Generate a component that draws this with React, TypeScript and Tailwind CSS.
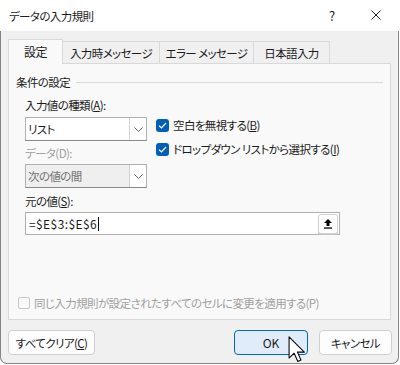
import React from 'react';

const Check = () => (
  <span className="flex h-[13px] w-[13px] items-center justify-center rounded-[3px] bg-[#005fb8]">
    <svg width="9" height="7" viewBox="0 0 9 7" fill="none">
      <path d="M1 3.6 L3.4 6 L8 1" stroke="#ffffff" strokeWidth="1.2" />
    </svg>
  </span>
);

const Chevron = () => (
  <svg width="9" height="5" viewBox="0 0 9 5" fill="none">
    <path d="M0.5 0.5 L4.5 4.5 L8.5 0.5" stroke="#5f5f5f" strokeWidth="1" />
  </svg>
);

const Combo = ({ value, disabled }: { value: string; disabled?: boolean }) => (
  <div
    className={`flex h-[24px] w-[122px] items-stretch border border-[#b0b0b0] border-b-[#8a8a8a] ${
      disabled ? 'bg-[#efefef] text-[#6f6f6f]' : 'bg-white text-[#1b1b1b]'
    }`}
  >
    <span className="flex flex-1 items-center pl-[2px]">{value}</span>
    <span className="flex w-[17px] items-center justify-center border-l border-[#d2d2d2] bg-white">
      <Chevron />
    </span>
  </div>
);

const Tab = ({ label, width }: { label: string; width: string }) => (
  <div className={`flex h-[22px] items-center justify-center border-t border-r border-[#d9d9d9] bg-[#f0f0f0] ${width}`}>
    {label}
  </div>
);

export default function App() {
  return (
    <div className="relative h-[365px] w-[400px] overflow-hidden bg-white font-['Noto_Sans_CJK_JP',sans-serif] text-[11.5px] leading-[16px] tracking-[-0.6px] text-[#1b1b1b] [font-feature-settings:'palt']">
      <div className="flex h-[364px] w-[399px] flex-col">
        {/* title bar */}
        <div className="flex h-[31px] items-center bg-white pl-[9px]">
          <span className="flex-1">データの入力規則</span>
          <span className="w-[42px] text-[13px]">?</span>
          <span className="flex w-[28px] items-center pb-px">
            <svg width="10" height="10" viewBox="0 0 10 10" fill="none">
              <path d="M0.5 0.5 L9.5 9.5 M9.5 0.5 L0.5 9.5" stroke="#1b1b1b" strokeWidth="1" />
            </svg>
          </span>
        </div>

        {/* body */}
        <div className="flex flex-1 flex-col rounded-b-[7px] border-x border-b border-[#858585] bg-[#f0f0f0] px-[7px]">
          {/* tabs */}
          <div className="mt-[8px] flex h-[24px] items-end">
            <div className="relative z-10 -mb-px flex h-[25px] w-[55px] items-center justify-center border-x border-t border-[#d9d9d9] bg-[#f9f9f9] text-[12px]">
              設定
            </div>
            <Tab label="入力時メッセージ" width="w-[97px]" />
            <Tab label="エラー メッセージ" width="w-[94px]" />
            <Tab label="日本語入力" width="w-[76px]" />
          </div>

          {/* panel */}
          <div className="flex h-[257px] flex-col border border-[#d9d9d9] bg-[#f9f9f9] pl-[7px]">
            <div className="mt-[10px] flex items-center pr-[7px]">
              <span>条件の設定</span>
              <span className="ml-[6px] h-px flex-1 bg-[#d9d9d9]" />
            </div>

            <div className="ml-[9px] mt-[7px] flex">
              <div className="flex w-[122px] flex-col">
                <span>
                  入力値の種類(<span className="underline">A</span>):
                </span>
                <div className="mt-[4px]">
                  <Combo value="リスト" />
                </div>
                <span className="mt-[4px] text-[#a0a0a0]">データ(D):</span>
                <div className="mt-[3px]">
                  <Combo value="次の値の間" disabled />
                </div>
              </div>
              <div className="ml-[9px] flex flex-col gap-[8px] pt-[20px]">
                <div className="flex h-[16px] items-center gap-[4px]">
                  <Check />
                  <span>
                    空白を無視する(<span className="underline">B</span>)
                  </span>
                </div>
                <div className="flex h-[16px] items-center gap-[4px]">
                  <Check />
                  <span>
                    ドロップダウン リストから選択する(<span className="underline">I</span>)
                  </span>
                </div>
              </div>
            </div>

            <span className="ml-[9px] mt-[5px]">
              元の値(<span className="underline">S</span>):
            </span>
            <div className="ml-[9px] mt-[3px] flex h-[23px] w-[315px] items-center border border-[#b0b0b0] bg-white pl-[3px] pr-px">
              <span className="flex flex-1 items-center text-[12px] tracking-[0.4px]">
                =$E$3:$E$6
                <span className="ml-px h-[14px] w-px bg-black" />
              </span>
              <span className="flex h-[20px] w-[20px] items-center justify-center rounded-[3px] border border-[#d0d0d0] bg-white shadow-[0_1px_0_#c4c4c4]">
                <svg width="10" height="11" viewBox="0 0 10 11" fill="none">
                  <path d="M5 1 L9 5 H6.5 V8 H3.5 V5 H1 Z" fill="#000000" />
                  <rect x="1" y="9.4" width="8" height="1.3" fill="#000000" />
                </svg>
              </span>
            </div>

            <div className="mb-[8px] mt-auto flex h-[16px] items-center gap-[4px] pl-[2px] text-[#a0a0a0]">
              <span className="h-[12px] w-[12px] rounded-[2px] border border-[#c6c6c6] bg-[#f9f9f9]" />
              <span>同じ入力規則が設定されたすべてのセルに変更を適用する(P)</span>
            </div>
          </div>

          {/* buttons */}
          <div className="mt-[10px] flex items-center justify-between">
            <button className="h-[25px] w-[87px] rounded-[4px] border border-[#d0d0d0] bg-[#fdfdfd]">
              すべてクリア(<span className="underline">C</span>)
            </button>
            <div className="-mr-px flex gap-[11px]">
              <button className="h-[25px] w-[74px] rounded-[4px] border border-[#0067c0] bg-[#e0ecf9] text-[12px] tracking-normal">
                OK
              </button>
              <button className="h-[25px] w-[73px] rounded-[4px] border border-[#d0d0d0] bg-[#fdfdfd]">キャンセル</button>
            </div>
          </div>
        </div>
      </div>

      {/* mouse pointer */}
      <svg className="absolute left-[288px] top-[336px]" width="18" height="26" viewBox="0 0 12.4 18.4">
        <path
          d="M0.6 0.6 V15.6 L4.2 12.2 L6.8 18 L9 17 L6.5 11.4 H11.4 Z"
          fill="#ffffff"
          stroke="#000000"
          strokeWidth="0.75"
          strokeLinejoin="round"
        />
      </svg>
    </div>
  );
}
